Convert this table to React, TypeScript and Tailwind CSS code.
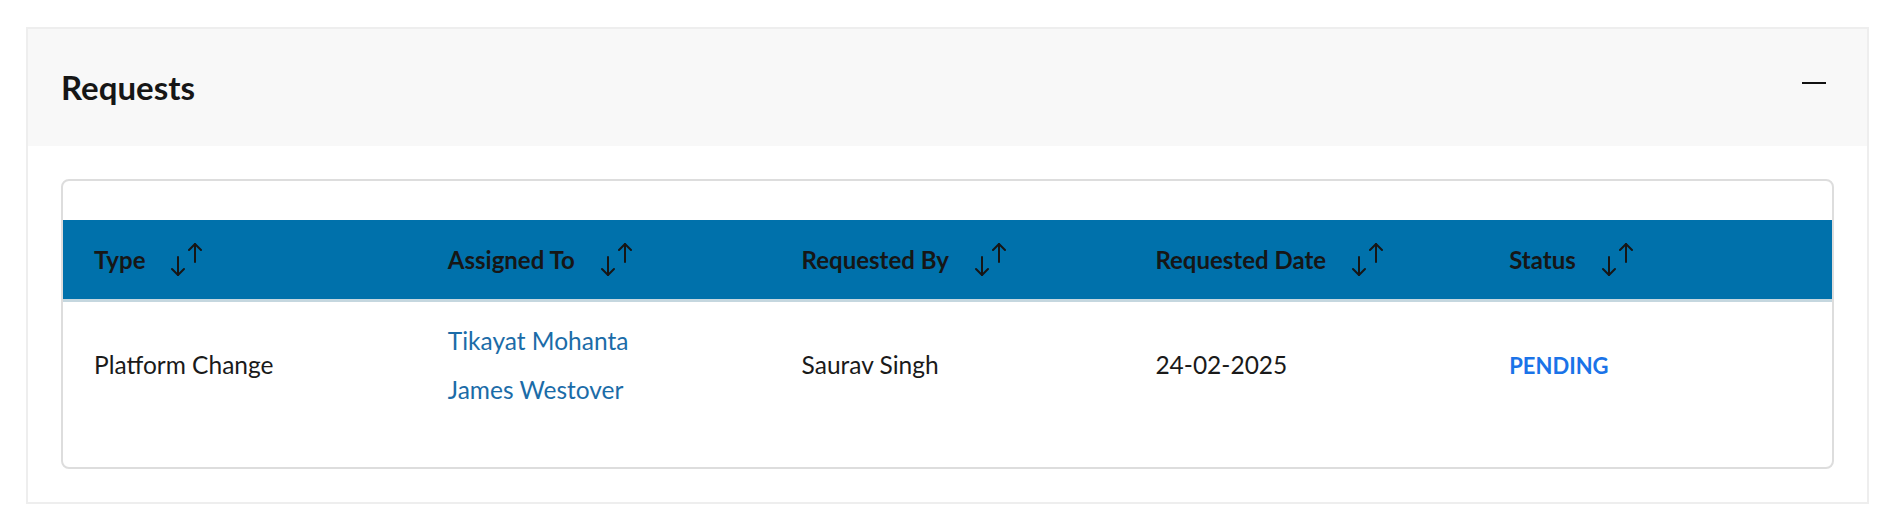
import React from "react";

function SortIcon() {
  return (
    <svg width="34" height="34" viewBox="0 0 34 34" fill="none" stroke="#161616" strokeWidth="2" strokeLinecap="round" strokeLinejoin="round">
      <path d="M8 14 V32" />
      <path d="M2 26 L8 32 L14 26" />
      <path d="M25 1 V19" />
      <path d="M19 7 L25 1 L31 7" />
    </svg>
  );
}

const headers = ["Type", "Assigned To", "Requested By", "Requested Date", "Status"];

export default function App() {
  return (
    <div
      className="min-h-[526px] bg-white pt-[27px] pl-[26px]"
      style={{ fontFamily: "Lato, 'Noto Sans', sans-serif" }}
    >
      <div className="w-[1843px] border-2 border-[#eeeeee]">
        <div className="h-[117px] bg-[#f8f8f8] flex items-center justify-between pl-[33px] pr-[41px]">
          <h2 className="text-[33px] font-bold text-[#161616] leading-none">Requests</h2>
          <button className="w-6 h-6 flex items-center">
            <span className="block w-6 h-[2px] bg-[#111111] -mt-[10px]" />
          </button>
        </div>
        <div className="p-[33px]">
          <div className="rounded-lg border-2 border-[#dddddd] pt-[39px] pb-[38px] overflow-hidden">
            <div className="grid grid-cols-5 h-[82px] bg-[#0071ab] border-b-[3px] border-[#c5d7df]">
              {headers.map((h) => (
                <div key={h} className="flex items-center pl-[31px] gap-[25px]">
                  <span className="text-[24px] font-bold text-[#161616]">{h}</span>
                  <SortIcon />
                </div>
              ))}
            </div>
            <div className="grid grid-cols-5 items-center py-[23px] text-[24.5px] text-[#1a1a1a]">
              <div className="pl-[31px]">Platform Change</div>
              <div className="pl-[31px] flex flex-col gap-[17px] text-[#1b6ca8]">
                <span className="leading-8">Tikayat Mohanta</span>
                <span className="leading-8">James Westover</span>
              </div>
              <div className="pl-[31px]">Saurav Singh</div>
              <div className="pl-[31px]">24-02-2025</div>
              <div className="pl-[31px] font-bold text-[22px] text-[#1a73e8]">PENDING</div>
            </div>
          </div>
        </div>
      </div>
    </div>
  );
}
